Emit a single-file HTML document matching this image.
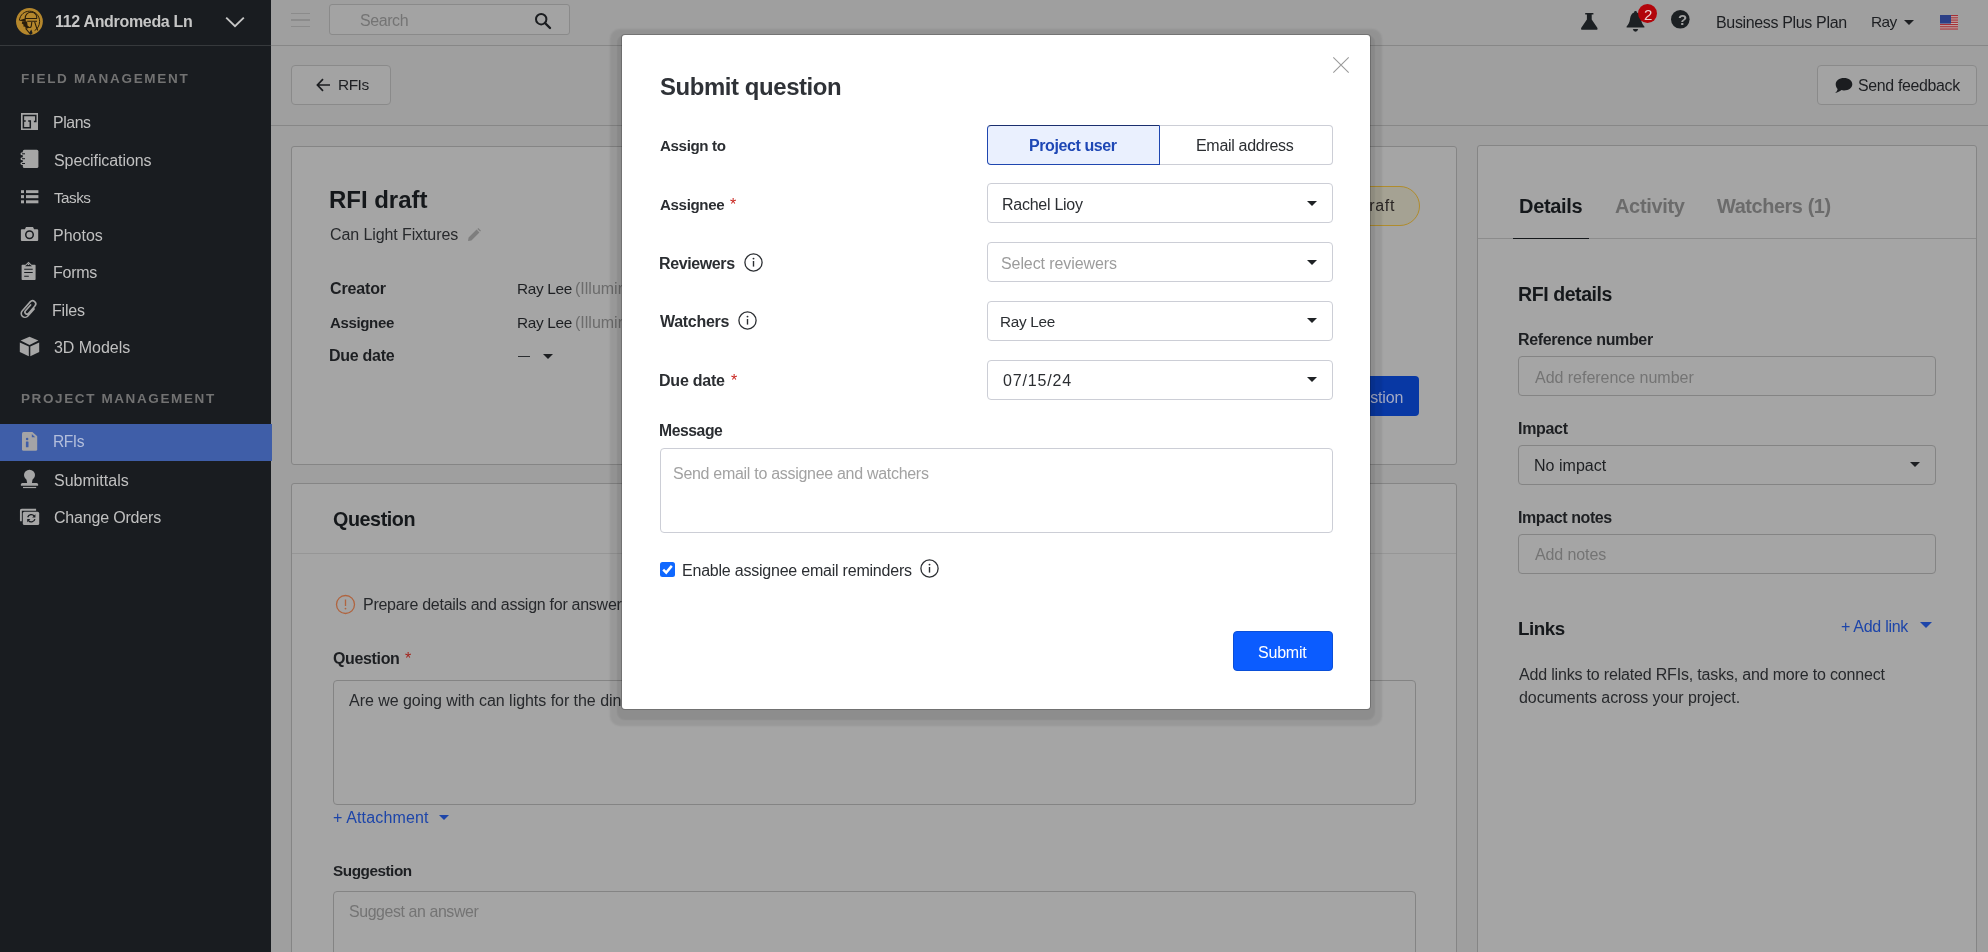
<!DOCTYPE html>
<html lang="en"><head>
<meta charset="utf-8">
<title>RFI draft</title>
<style>
*{box-sizing:border-box;margin:0;padding:0}
html,body{width:1988px;height:952px;overflow:hidden}
body{font-family:"Liberation Sans",sans-serif;font-size:16px;color:#1d1f22;background:#9f9f9f;position:relative}
.abs{position:absolute}
b,.b{font-weight:700}
svg{display:block}
#side,#top,#sub,.card,#modal{will-change:transform}
/* sidebar */
#side{position:absolute;left:0;top:0;width:271px;height:952px;background:#191c20;color:#c0c0c0}
#side .hdr{position:absolute;left:0;top:0;width:271px;height:46px;border-bottom:1px solid #36393c}
#side .sec{font-size:13.5px;font-weight:700;color:#727272}
#side .on{position:absolute;left:0;top:423.7px;width:272px;height:37.7px;background:#3f5ea8}
#side svg{position:absolute}
/* page chrome */
#top{position:absolute;left:271px;top:0;width:1717px;height:46px;border-bottom:1px solid #878787}
#sub{position:absolute;left:271px;top:46px;width:1717px;height:80px;border-bottom:1px solid #878787}
.btn{position:absolute;border:1px solid #8a8a8a;border-radius:4px;background:#a3a3a3}
.card{position:absolute;background:#a5a5a5;border:1px solid #858585;border-radius:3px;overflow:hidden}
.inp{position:absolute;border:1px solid #848484;border-radius:4px;background:#a5a5a5}
.ph{color:#747474}
.gr{color:#6c6c6c}
.blue{color:#1d45a9}
.star{color:#a3231c}
.caret{position:absolute;width:0;height:0;border-left:5px solid transparent;border-right:5px solid transparent;border-top:5.5px solid #1d1f22}
/* modal */
#modal{position:absolute;left:622px;top:35px;width:748px;height:674px;background:#fff;border-radius:3px;box-shadow:0 0 0 1px rgba(0,0,0,.2),0 5.5px 1.5px 5px rgba(0,0,0,.075),0 5.5px 2px 11.5px rgba(0,0,0,.078);color:#2b2e32}
#modal .sel{position:absolute;left:365px;width:346px;height:40px;border:1px solid #ccced6;border-radius:4px;background:#fff}
#modal .star{color:#c9251f}
#modal .ph{color:#9c9c9c}
#modal .caret{border-top-color:#1f2225}
.info{position:absolute}
</style>
</head>
<body>

<!-- ============ SIDEBAR ============ -->
<div id="side">
  <div class="hdr">
    <svg style="left:16.3px;top:8.3px" width="27" height="27" viewBox="0 0 27 27">
      <circle cx="13.45" cy="13.45" r="13.4" fill="#b5872c"></circle>
      <path d="M3.4 12.2 C4.2 6.6 8.4 3.2 13.6 3.2 C19.4 3.2 23.6 7.8 23.6 13.4 C23.6 17.6 21.6 20.8 18.6 22.6" fill="none" stroke="#2a1e0c" stroke-width="1"></path>
      <path d="M9.2 10.4 C9.2 6.4 11.8 4.3 15 4.3 C18.3 4.3 20.9 6.4 20.9 10.4 M9 10.5 H21 M11.2 13.3 H21" fill="none" stroke="#2a1e0c" stroke-width="1.1"></path>
      <path d="M2.8 12.6 L9.6 10.2 L9.9 13.9 Z" fill="#2a1e0c"></path>
      <path d="M6.2 13.6 L11 13.4 L11.6 17.6 L13.2 19.8 L10.4 20.8 L8.6 18.6 L7.6 18.8 L7.4 16.6 L5.8 15.6 Z" fill="#2a1e0c"></path>
      <path d="M9.6 20.4 L14.2 26 M18.6 13.6 C19.6 17 20.4 19.6 21.8 22.6 M12 18.6 C13.6 20.2 15.2 19.6 15.4 17.4 L15.8 14" fill="none" stroke="#2a1e0c" stroke-width="1.1"></path>
      <path d="M13.3 24.4 L15.3 21.6 L16.6 25.2 L14.6 26.9 Z" fill="#191c20"></path>
    </svg>
    <span class="b" style="font-size: 16px; color: rgb(198, 198, 198); position: absolute; white-space: nowrap; line-height: 21px; left: 55px; top: 11px; letter-spacing: -0.318px;">112 Andromeda Ln</span>
    <svg style="left:224px;top:14px" width="22" height="16" viewBox="0 0 22 16"><path d="M2.2 3.6 L11 12.2 L19.8 3.6" fill="none" stroke="#c6c6c6" stroke-width="1.9"></path></svg>
  </div>

  <span class="sec" style="position: absolute; white-space: nowrap; line-height: 19px; left: 21px; top: 69px; letter-spacing: 1.717px;">FIELD MANAGEMENT</span>
  <span style="font-size: 15.86px; position: absolute; white-space: nowrap; line-height: 21px; left: 53px; top: 112px; letter-spacing: -0.428px;">Plans</span>
  <span style="position: absolute; white-space: nowrap; line-height: 21px; left: 54px; top: 150px; letter-spacing: -0.094px;">Specifications</span>
  <span style="font-size: 15.25px; position: absolute; white-space: nowrap; line-height: 21px; left: 54px; top: 187px; letter-spacing: -0.506px;">Tasks</span>
  <span style="position: absolute; white-space: nowrap; line-height: 21px; left: 53px; top: 225px; letter-spacing: -0.003px;">Photos</span>
  <span style="position: absolute; white-space: nowrap; line-height: 21px; left: 53px; top: 262px; letter-spacing: -0.257px;">Forms</span>
  <span style="position: absolute; white-space: nowrap; line-height: 21px; left: 52px; top: 300px; letter-spacing: -0.195px;">Files</span>
  <span style="position: absolute; white-space: nowrap; line-height: 21px; left: 54px; top: 337px; letter-spacing: -0.035px;">3D Models</span>

  <span class="sec" style="position: absolute; white-space: nowrap; line-height: 19px; left: 21px; top: 389px; letter-spacing: 1.611px;">PROJECT MANAGEMENT</span>
  <div class="on"></div>
  <span style="color: rgb(180, 191, 220); font-size: 15.6px; position: absolute; white-space: nowrap; line-height: 21px; left: 53px; top: 431px; letter-spacing: -0.473px;">RFIs</span>
  <span style="position: absolute; white-space: nowrap; line-height: 21px; left: 54px; top: 470px; letter-spacing: 0.001px;">Submittals</span>
  <span style="position: absolute; white-space: nowrap; line-height: 21px; left: 54px; top: 507px; letter-spacing: -0.183px;">Change Orders</span>
    <!-- Plans -->
  <svg style="left:20.8px;top:112.8px" width="17.4" height="17.4" viewBox="0 0 17.4 17.4"><rect width="17.4" height="17.4" fill="#a6a6a6"></rect><path d="M12.9 8.5 H14.8 V2.4 H2.4 V14.8 H9.3 V8 H7.2 M2.4 8 H4.7" fill="none" stroke="#191c20" stroke-width="1.5"></path></svg>
  <!-- Specifications -->
  <svg style="left:20px;top:149px" width="20" height="20" viewBox="0 0 20 20"><rect x="2.8" y="0.8" width="15.6" height="18.2" rx="1.6" fill="#a6a6a6"></rect><g fill="#a6a6a6"><ellipse cx="2.4" cy="4.8" rx="1.9" ry="1.5"></ellipse><ellipse cx="2.4" cy="9.7" rx="1.9" ry="1.5"></ellipse><ellipse cx="2.4" cy="14.5" rx="1.9" ry="1.5"></ellipse></g><g fill="#191c20"><rect x="2" y="4.3" width="3" height="1"></rect><rect x="2" y="9.2" width="3" height="1"></rect><rect x="2" y="14" width="3" height="1"></rect></g></svg>
  <!-- Tasks -->
  <svg style="left:21px;top:190px" width="18" height="14" viewBox="0 0 18 14"><g fill="#a6a6a6"><rect x="0" y="0.2" width="3" height="2.9"></rect><rect x="5" y="0.2" width="12.4" height="2.9"></rect><rect x="0" y="5.1" width="3" height="3.1"></rect><rect x="5" y="5.1" width="12.4" height="3.1"></rect><rect x="0" y="10.3" width="3" height="3"></rect><rect x="5" y="10.3" width="12.4" height="3"></rect></g></svg>
  <!-- Photos -->
  <svg style="left:20px;top:226px" width="20" height="16" viewBox="0 0 20 16"><path d="M1.8 3.2 H4.9 L6 0.9 H13 L14.1 3.2 H17.2 Q18.2 3.2 18.2 4.2 V14 Q18.2 15 17.2 15 H1.8 Q0.9 15 0.9 14 V4.2 Q0.9 3.2 1.8 3.2 Z" fill="#a6a6a6"></path><circle cx="9.5" cy="8.8" r="3.75" fill="none" stroke="#191c20" stroke-width="1.5"></circle></svg>
  <!-- Forms -->
  <svg style="left:21px;top:261px" width="16" height="20" viewBox="0 0 16 20"><path d="M1.4 3.8 H4.4 L7.5 0.8 L10.6 3.8 H13.8 Q14.6 3.8 14.6 4.6 V18.2 Q14.6 19 13.8 19 H1.4 Q0.6 19 0.6 18.2 V4.6 Q0.6 3.8 1.4 3.8 Z" fill="#a6a6a6"></path><path d="M4 5.2 L7.5 2.6 L11 5.2 Z" fill="#191c20"></path><circle cx="7.5" cy="3.4" r="0.7" fill="#a6a6a6"></circle><path d="M3.2 8.2 H11.7 M3.2 11.5 H11.7 M3.2 15.3 H7.8" stroke="#191c20" stroke-width="1.05"></path></svg>
  <!-- Files -->
  <svg style="left:16px;top:296px" width="28" height="26" viewBox="0 0 28 26"><g transform="matrix(0.662 -0.749 0.749 0.662 10.88 9.63)"><path d="M2.38 7.6 L-7.1 7.6 A3.8 3.8 0 0 1 -7.1 0 L5 0 A3.15 3.15 0 0 1 5 6.3 L-4.83 6.3 A1.975 1.975 0 0 1 -4.83 2.35 L3 2.35" fill="none" stroke="#a6a6a6" stroke-width="1.6" stroke-linecap="round"></path></g></svg>
  <!-- 3D Models -->
  <svg style="left:19px;top:336px" width="21" height="21" viewBox="0 0 21 21"><g fill="#a6a6a6"><path d="M10.5 0.8 L19.4 4.5 L10.5 9 L1.6 4.5 Z"></path><path d="M0.8 6.6 L9.8 10.4 V20.2 L0.8 15.9 Z"></path><path d="M11.3 10.4 L20.2 6.6 V15.9 L11.3 20.2 Z"></path></g></svg>
  <!-- RFIs -->
  <svg style="left:21px;top:431px" width="18" height="21" viewBox="0 0 18 21"><path d="M2.5 1.1 H11.4 L16.2 5.2 V18.3 Q16.2 19.8 14.7 19.8 H2.5 Q1 19.8 1 18.3 V2.6 Q1 1.1 2.5 1.1 Z" fill="#a4a4a6"></path><path d="M10.8 3 V6.3 H14.2 Z" fill="#3f5ea8"></path><circle cx="6.1" cy="7.9" r="1.25" fill="#3f5ea8"></circle><rect x="4.9" y="10.6" width="2.6" height="5.6" rx="0.5" fill="#3f5ea8"></rect></svg>
  <!-- Submittals -->
  <svg style="left:20px;top:469px" width="20" height="20" viewBox="0 0 20 20"><g fill="#a6a6a6"><ellipse cx="9.5" cy="6.1" rx="5.5" ry="5.3"></ellipse><path d="M6.2 9 H12.8 L11.9 14.2 H7.2 Z"></path><path d="M2.4 14 H16.6 Q18.1 14 18.1 15.5 V16.8 H0.9 V15.5 Q0.9 14 2.4 14 Z"></path><rect x="3" y="17.9" width="13.2" height="1.2"></rect></g></svg>
  <!-- Change Orders -->
  <svg style="left:19px;top:508px" width="22" height="18" viewBox="0 0 22 18"><path d="M1.9 13.2 V2.6 Q1.9 1.8 2.7 1.8 H17.1" fill="none" stroke="#a6a6a6" stroke-width="1.9"></path><rect x="3.8" y="3.8" width="16.4" height="13.2" rx="1.6" fill="#a6a6a6"></rect><path d="M8.7 9.3 A3.7 3.7 0 0 1 15.3 8.2 M15.9 11.1 A3.7 3.7 0 0 1 9.3 12.3" fill="none" stroke="#191c20" stroke-width="1.3"></path><path d="M16.4 6.2 V9.4 H13.2 Z M8.2 14.3 V11.1 H11.4 Z" fill="#191c20"></path></svg>

</div>

<!-- ============ TOPBAR ============ -->
<div id="top">
  <div class="abs" style="left:20px;top:12.5px;width:19px;height:1.5px;background:#8b8b8b"></div>
  <div class="abs" style="left:20px;top:19px;width:19px;height:1.5px;background:#8b8b8b"></div>
  <div class="abs" style="left:20px;top:25.5px;width:19px;height:1.5px;background:#8b8b8b"></div>
  <div class="btn" style="left:58px;top:4px;width:241px;height:31px;border-radius:3px"></div>
  <span class="ph" style="font-size: 15.97px; position: absolute; white-space: nowrap; line-height: 21px; left: 89px; top: 10px; letter-spacing: -0.415px;">Search</span>
  <svg class="abs" style="left:263px;top:12px" width="18" height="18" viewBox="0 0 18 18"><circle cx="7.2" cy="7.2" r="5.2" fill="none" stroke="#1b1d20" stroke-width="2"></circle><path d="M11 11 L16 16" stroke="#1b1d20" stroke-width="2.4" stroke-linecap="round"></path></svg>
    <!-- flask -->
  <svg class="abs" style="left:1309px;top:12px" width="19" height="19" viewBox="0 0 19 19"><path d="M5.2 1.1 H13.4 V2.5 H11.7 V7.4 L17.3 15.7 Q18.2 17.8 16.2 17.8 H2.4 Q0.4 17.8 1.3 15.7 L6.9 7.4 V2.5 H5.2 Z" fill="#1c2023"></path></svg>
  <!-- bell -->
  <svg class="abs" style="left:1355px;top:10px" width="20" height="23" viewBox="0 0 20 23"><path d="M9.5 1 C10.4 1 10.9 1.6 10.9 2.4 C13.2 3.2 14.5 5.4 14.9 8.6 C15.4 12.6 16.6 14.8 18.4 16.4 V17.6 H0.6 V16.4 C2.4 14.8 3.6 12.6 4.1 8.6 C4.5 5.4 5.8 3.2 8.1 2.4 C8.1 1.6 8.6 1 9.5 1 Z" fill="#1c2023"></path><path d="M6.8 19.1 H12.2 Q11.6 21.7 9.5 21.7 Q7.4 21.7 6.8 19.1 Z" fill="#1c2023"></path></svg>
  <div class="abs" style="left:1367px;top:4px;width:19.4px;height:19.4px;border-radius:10px;background:#b2050b"></div>
  <span style="font-size: 15px; color: rgb(236, 210, 210); position: absolute; white-space: nowrap; line-height: 21px; left: 1373px; top: 4px;">2</span>
  <!-- help -->
  <svg class="abs" style="left:1399px;top:9px" width="21" height="21" viewBox="0 0 21 21"><circle cx="10.3" cy="10.3" r="9.3" fill="#1c2023"></circle></svg>
  <span class="b" style="font-size: 15px; color: rgb(162, 162, 162); position: absolute; white-space: nowrap; line-height: 21px; left: 1407px; top: 9px;">?</span>
  <!-- flag -->
  <svg class="abs" style="left:1669px;top:15.3px" width="18" height="14.6" viewBox="0 0 18 14.6"><rect width="18" height="14.6" fill="#bdb0b0"></rect><g fill="#a62f35"><rect y="0" width="18" height="1.15"></rect><rect y="2.25" width="18" height="1.15"></rect><rect y="4.5" width="18" height="1.15"></rect><rect y="6.75" width="18" height="1.15"></rect><rect y="9" width="18" height="1.15"></rect><rect y="11.2" width="18" height="1.15"></rect><rect y="13.45" width="18" height="1.15"></rect></g><rect width="11" height="8.6" fill="#2c3f86"></rect></svg>

  <span style="position: absolute; white-space: nowrap; line-height: 21px; left: 1445px; top: 12px; letter-spacing: -0.345px;">Business Plus Plan</span>
  <span style="font-size: 15.41px; position: absolute; white-space: nowrap; line-height: 21px; left: 1600px; top: 11px; letter-spacing: -0.537px;">Ray</span>
  <div class="caret" style="left:1632.8px;top:19.8px;border-left-width:5.2px;border-right-width:5.2px;border-top-width:5.5px"></div>
</div>
<div id="sub">
  <div class="btn" style="left:20px;top:19px;width:100px;height:40px"></div>
  <svg class="abs" style="left:45px;top:32px" width="15" height="14" viewBox="0 0 15 14"><path d="M7 1.2 L1.4 7 L7 12.8 M1.6 7 L14 7" fill="none" stroke="#1b1d20" stroke-width="1.7"></path></svg>
  <span style="font-size: 15.46px; position: absolute; white-space: nowrap; line-height: 21px; left: 67px; top: 28px; letter-spacing: -0.489px;">RFIs</span>
  <div class="btn" style="left:1546px;top:19px;width:160px;height:40px"></div>
  <svg class="abs" style="left:1562.5px;top:30.5px" width="19" height="17" viewBox="0 0 19 17"><path d="M10 1 C14.8 1 18.3 3.7 18.3 7.2 C18.3 10.7 14.8 13.4 10 13.4 C9.1 13.4 8.2 13.3 7.4 13.1 C5.8 14.6 3.6 15.6 1.2 15.9 C2.5 14.8 3.4 13.4 3.6 11.9 C2.4 10.7 1.7 9 1.7 7.2 C1.7 3.7 5.2 1 10 1 Z" fill="#1b1d20"></path></svg>
  <span style="font-size: 15.92px; position: absolute; white-space: nowrap; line-height: 21px; left: 1587px; top: 29px; letter-spacing: -0.331px;">Send feedback</span>
</div>
<!-- ============ CARD 1 ============ -->
<div class="card" id="c1" style="left:291px;top:146px;width:1166px;height:319px">
  <span class="b" style="font-size: 24px; color: rgb(21, 24, 27); position: absolute; white-space: nowrap; line-height: 31px; left: 37px; top: 37px; letter-spacing: -0.033px;">RFI draft</span>
  <span style="color: rgb(39, 41, 44); position: absolute; white-space: nowrap; line-height: 21px; left: 38px; top: 77px; letter-spacing: -0.096px;">Can Light Fixtures</span>
  <svg class="abs" style="left:175px;top:81px" width="15" height="14" viewBox="0 0 15 14"><path d="M1 13 L1.6 9.6 L9.6 1.6 L12.4 4.4 L4.4 12.4 Z M10.4 0.9 L11.3 0 L14 2.7 L13.1 3.6 Z" fill="#7e7e7e"></path></svg>
  <span class="b" style="position: absolute; white-space: nowrap; line-height: 21px; left: 38px; top: 131px; letter-spacing: -0.147px;">Creator</span>
  <span class="b" style="font-size: 15.04px; position: absolute; white-space: nowrap; line-height: 21px; left: 38px; top: 165px; letter-spacing: -0.368px;">Assignee</span>
  <span class="b" style="position: absolute; white-space: nowrap; line-height: 21px; left: 37px; top: 198px; letter-spacing: -0.267px;">Due date</span>
  <span style="font-size: 15.35px; position: absolute; white-space: nowrap; line-height: 21px; left: 225px; top: 131px; letter-spacing: -0.303px;">Ray Lee</span><span class="gr" style="position: absolute; white-space: nowrap; line-height: 21px; left: 283px; top: 131px;">(Illuminate Electric Co.)</span>
  <span style="font-size: 15.35px; position: absolute; white-space: nowrap; line-height: 21px; left: 225px; top: 165px; letter-spacing: -0.303px;">Ray Lee</span><span class="gr" style="position: absolute; white-space: nowrap; line-height: 21px; left: 283px; top: 165px;">(Illuminate Electric Co.)</span>
  <div class="abs" style="left:226px;top:209px;width:11.5px;height:1px;background:#2b2e31"></div>
  <div class="caret" style="left:251px;top:206.6px"></div>
  <div class="abs" style="left:1051px;top:38.5px;width:77px;height:40px;border-radius:20px;background:#a5a293;border:1px solid #b08c2c"></div>
  <span style="color: rgb(42, 38, 36); position: absolute; white-space: nowrap; line-height: 21px; left: 1065px; top: 48px; letter-spacing: 0.668px;">Draft</span>
  <div class="abs" style="left:981px;top:228.5px;width:146px;height:40px;border-radius:4px;background:#0838a4"></div>
  <span style="color: rgb(164, 170, 196); position: absolute; white-space: nowrap; line-height: 21px; left: 999px; top: 240px; letter-spacing: -0.174px;">Submit question</span>
</div>

<!-- ============ CARD 2 ============ -->
<div class="card" id="c2" style="left:291px;top:483px;width:1166px;height:500px">
  <span class="b" style="font-size: 19.76px; color: rgb(21, 24, 27); position: absolute; white-space: nowrap; line-height: 26px; left: 41px; top: 22px; letter-spacing: -0.432px;">Question</span>
  <div class="abs" style="left:0;top:69px;width:1166px;height:1px;background:#969696"></div>
  <svg class="abs" style="left:43px;top:109.5px" width="21" height="21" viewBox="0 0 21 21"><circle cx="10.5" cy="10.5" r="9" fill="none" stroke="#b0643f" stroke-width="1.3"></circle><path d="M10.5 5.6 V12" stroke="#b0643f" stroke-width="1.3"></path><circle cx="10.5" cy="14.6" r="0.9" fill="#b0643f"></circle></svg>
  <span style="color: rgb(39, 41, 44); position: absolute; white-space: nowrap; line-height: 21px; left: 71px; top: 110px; letter-spacing: -0.271px;">Prepare details and assign for answer</span>
  <span class="b" style="position: absolute; white-space: nowrap; line-height: 21px; left: 41px; top: 164px; letter-spacing: -0.352px;">Question</span><span class="star" style="position: absolute; white-space: nowrap; line-height: 21px; left: 113px; top: 164px;">*</span>
  <div class="inp" style="left:41px;top:196px;width:1083px;height:125px"></div>
  <span style="color: rgb(39, 41, 44); position: absolute; white-space: nowrap; line-height: 21px; left: 57px; top: 206px; letter-spacing: -0.039px;">Are we going with can lights for the din</span><span style="color: rgb(39, 41, 44); position: absolute; white-space: nowrap; line-height: 21px; left: 331px; top: 206px;">ing room or pendant fixtures over the table?</span>
  <span class="blue" style="position: absolute; white-space: nowrap; line-height: 21px; left: 41px; top: 323px; letter-spacing: 0.148px;">+ Attachment</span>
  <div class="caret" style="left:146.8px;top:330.5px;border-top-color:#1d45a9;border-left-width:5.2px;border-right-width:5.2px"></div>
  <span class="b" style="font-size: 15.3px; position: absolute; white-space: nowrap; line-height: 21px; left: 41px; top: 376px; letter-spacing: -0.46px;">Suggestion</span>
  <div class="inp" style="left:41px;top:407px;width:1083px;height:125px"></div>
  <span class="ph" style="font-size: 15.93px; position: absolute; white-space: nowrap; line-height: 21px; left: 57px; top: 417px; letter-spacing: -0.411px;">Suggest an answer</span>
</div>

<!-- ============ RIGHT PANEL ============ -->
<div class="card" id="c3" style="left:1477px;top:145px;width:500px;height:840px">
  <span class="b" style="font-size: 20px; color: rgb(21, 24, 27); position: absolute; white-space: nowrap; line-height: 26px; left: 41px; top: 47px; letter-spacing: -0.31px;">Details</span>
  <span class="b" style="font-size: 20px; color: rgb(107, 107, 107); position: absolute; white-space: nowrap; line-height: 26px; left: 137px; top: 47px; letter-spacing: -0.332px;">Activity</span>
  <span class="b" style="font-size: 19.91px; color: rgb(107, 107, 107); position: absolute; white-space: nowrap; line-height: 26px; left: 239px; top: 47px; letter-spacing: -0.418px;">Watchers (1)</span>
  <div class="abs" style="left:0;top:92px;width:500px;height:1px;background:#8c8c8c"></div>
  <div class="abs" style="left:35px;top:91.6px;width:76px;height:1.6px;background:#15181b"></div>
  <span class="b" style="font-size: 19.54px; color: rgb(21, 24, 27); position: absolute; white-space: nowrap; line-height: 26px; left: 40px; top: 135px; letter-spacing: -0.433px;">RFI details</span>
  <span class="b" style="position: absolute; white-space: nowrap; line-height: 21px; left: 40px; top: 183px; letter-spacing: -0.358px;">Reference number</span>
  <div class="inp" style="left:40px;top:210px;width:418px;height:40px"></div>
  <span class="ph" style="position: absolute; white-space: nowrap; line-height: 21px; left: 57px; top: 221px; letter-spacing: -0.025px;">Add reference number</span>
  <span class="b" style="position: absolute; white-space: nowrap; line-height: 21px; left: 40px; top: 272px; letter-spacing: -0.308px;">Impact</span>
  <div class="inp" style="left:40px;top:299px;width:418px;height:40px"></div>
  <span style="position: absolute; white-space: nowrap; line-height: 21px; left: 56px; top: 309px; letter-spacing: 0.028px;">No impact</span>
  <div class="caret" style="left:431.5px;top:315.8px;border-left-width:5.2px;border-right-width:5.2px;border-top-width:5.6px"></div>
  <span class="b" style="position: absolute; white-space: nowrap; line-height: 21px; left: 40px; top: 361px; letter-spacing: -0.408px;">Impact notes</span>
  <div class="inp" style="left:40px;top:388px;width:418px;height:40px"></div>
  <span class="ph" style="position: absolute; white-space: nowrap; line-height: 21px; left: 57px; top: 398px; letter-spacing: -0.107px;">Add notes</span>
  <span class="b" style="font-size: 18.8px; color: rgb(21, 24, 27); position: absolute; white-space: nowrap; line-height: 25px; left: 40px; top: 470px; letter-spacing: -0.477px;">Links</span>
  <span class="blue" style="position: absolute; white-space: nowrap; line-height: 21px; left: 363px; top: 470px; letter-spacing: -0.279px;">+ Add link</span>
  <div class="caret" style="left:442.2px;top:476.4px;border-top-color:#1d45a9;border-left-width:6.1px;border-right-width:6.1px;border-top-width:6.4px"></div>
  <span style="color: rgb(39, 41, 44); position: absolute; white-space: nowrap; line-height: 21px; left: 41px; top: 518px; letter-spacing: -0.18px;">Add links to related RFIs, tasks, and more to connect</span>
  <span style="color: rgb(39, 41, 44); position: absolute; white-space: nowrap; line-height: 21px; left: 41px; top: 541px; letter-spacing: -0.041px;">documents across your project.</span>
</div>

<!-- ============ MODAL ============ -->
<div id="modal">
  <span class="b" style="font-size: 23.93px; color: rgb(47, 50, 55); position: absolute; white-space: nowrap; line-height: 31px; left: 38px; top: 36px; letter-spacing: -0.411px;">Submit question</span>
  <svg class="abs" style="left:709.5px;top:21px" width="18" height="18" viewBox="0 0 18 18"><path d="M1.3 1.3 L16.7 16.7 M16.7 1.3 L1.3 16.7" stroke="#9b9b9b" stroke-width="1.1"></path></svg>

  <span class="b" style="font-size: 15.11px; position: absolute; white-space: nowrap; line-height: 21px; left: 38px; top: 100px; letter-spacing: -0.363px;">Assign to</span>
  <div class="abs" style="left:538px;top:90px;width:173px;height:40px;border:1px solid #ccced6;border-left:0;border-radius:0 4px 4px 0"></div>
  <div class="abs" style="left:365px;top:90px;width:173px;height:40px;border:1px solid #1f47b0;border-top-color:#1b2f6e;border-radius:4px 0 0 4px;background:#eaf0fe"></div>
  <span class="b" style="color: rgb(30, 71, 181); position: absolute; white-space: nowrap; line-height: 21px; left: 407px; top: 100px; letter-spacing: -0.405px;">Project user</span>
  <span style="position: absolute; white-space: nowrap; line-height: 21px; left: 574px; top: 100px; letter-spacing: -0.306px;">Email address</span>

  <span class="b" style="font-size: 15.08px; position: absolute; white-space: nowrap; line-height: 21px; left: 38px; top: 159px; letter-spacing: -0.342px;">Assignee</span><span class="star" style="position: absolute; white-space: nowrap; line-height: 21px; left: 108px; top: 159px;">*</span>
  <div class="sel" style="top:148px"></div>
  <span style="position: absolute; white-space: nowrap; line-height: 21px; left: 380px; top: 159px; letter-spacing: -0.26px;">Rachel Lioy</span>
  <div class="caret" style="left:685.2px;top:166px;border-left-width:5.1px;border-right-width:5.1px;border-top-width:5.4px"></div>

  <span class="b" style="position: absolute; white-space: nowrap; line-height: 21px; left: 37px; top: 218px; letter-spacing: -0.383px;">Reviewers</span>
  <svg class="info" style="left:120.5px;top:217px" width="21" height="21" viewBox="0 0 21 21"><circle cx="10.5" cy="10.5" r="8.6" fill="none" stroke="#2b2e32" stroke-width="1.3"></circle><path d="M10.5 9 V14.6" stroke="#2b2e32" stroke-width="1.4"></path><circle cx="10.5" cy="6.6" r="0.95" fill="#2b2e32"></circle></svg>
  <div class="sel" style="top:207px"></div>
  <span class="ph" style="position: absolute; white-space: nowrap; line-height: 21px; left: 379px; top: 218px; letter-spacing: -0.092px;">Select reviewers</span>
  <div class="caret" style="left:685.2px;top:224.7px;border-left-width:5.1px;border-right-width:5.1px;border-top-width:5.4px"></div>

  <span class="b" style="position: absolute; white-space: nowrap; line-height: 21px; left: 38px; top: 276px; letter-spacing: -0.29px;">Watchers</span>
  <svg class="info" style="left:114.9px;top:275px" width="21" height="21" viewBox="0 0 21 21"><circle cx="10.5" cy="10.5" r="8.6" fill="none" stroke="#2b2e32" stroke-width="1.3"></circle><path d="M10.5 9 V14.6" stroke="#2b2e32" stroke-width="1.4"></path><circle cx="10.5" cy="6.6" r="0.95" fill="#2b2e32"></circle></svg>
  <div class="sel" style="top:266px"></div>
  <span style="font-size: 15.3px; position: absolute; white-space: nowrap; line-height: 21px; left: 378px; top: 276px; letter-spacing: -0.303px;">Ray Lee</span>
  <div class="caret" style="left:685.2px;top:283.3px;border-left-width:5.1px;border-right-width:5.1px;border-top-width:5.4px"></div>

  <span class="b" style="position: absolute; white-space: nowrap; line-height: 21px; left: 37px; top: 335px; letter-spacing: -0.225px;">Due date</span><span class="star" style="position: absolute; white-space: nowrap; line-height: 21px; left: 109px; top: 335px;">*</span>
  <div class="sel" style="top:325px"></div>
  <span style="position: absolute; white-space: nowrap; line-height: 21px; left: 381px; top: 335px; letter-spacing: 0.845px;">07/15/24</span>
  <div class="caret" style="left:685.2px;top:342px;border-left-width:5.1px;border-right-width:5.1px;border-top-width:5.4px"></div>

  <span class="b" style="font-size: 15.72px; position: absolute; white-space: nowrap; line-height: 21px; left: 37px; top: 385px; letter-spacing: -0.434px;">Message</span>
  <div class="abs" style="left:38px;top:413px;width:673px;height:85px;border:1px solid #ccced6;border-radius:4px"></div>
  <span class="ph" style="color: rgb(162, 162, 162); position: absolute; white-space: nowrap; line-height: 21px; left: 51px; top: 428px; letter-spacing: -0.295px;">Send email to assignee and watchers</span>

  <div class="abs" style="left:38px;top:526.5px;width:15px;height:15px;border-radius:2.5px;background:#0f68ff"></div>
  <svg class="abs" style="left:38px;top:526.5px" width="15" height="15" viewBox="0 0 15 15"><path d="M3.2 7.6 L6.2 10.6 L11.8 3.9" fill="none" stroke="#fff" stroke-width="2.5"></path></svg>
  <span style="position: absolute; white-space: nowrap; line-height: 21px; left: 60px; top: 525px; letter-spacing: -0.219px;">Enable assignee email reminders</span>
  <svg class="info" style="left:297px;top:523px" width="21" height="21" viewBox="0 0 21 21"><circle cx="10.5" cy="10.5" r="8.6" fill="none" stroke="#2b2e32" stroke-width="1.3"></circle><path d="M10.5 9 V14.6" stroke="#2b2e32" stroke-width="1.4"></path><circle cx="10.5" cy="6.6" r="0.95" fill="#2b2e32"></circle></svg>

  <div class="abs" style="left:611px;top:596px;width:100px;height:40px;border-radius:4px;background:#0b5cff;border:1px solid #0a4fd8"></div>
  <span style="color: rgb(255, 255, 255); position: absolute; white-space: nowrap; line-height: 21px; left: 636px; top: 607px; letter-spacing: -0.21px;">Submit</span>
</div>



</body></html>
